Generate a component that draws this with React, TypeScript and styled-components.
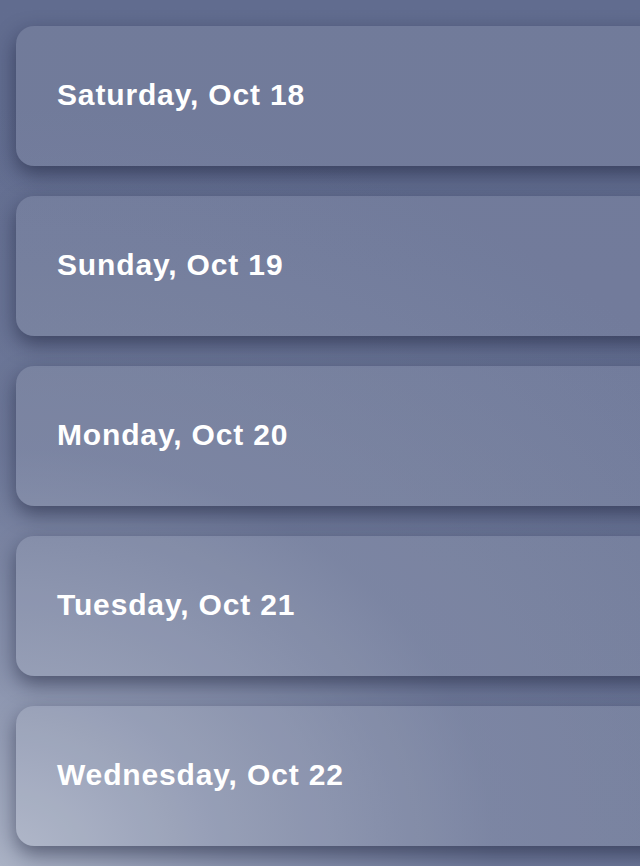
import React from "react";
import styled, { createGlobalStyle } from "styled-components";

const GlobalStyle = createGlobalStyle`
  html, body {
    margin: 0;
    padding: 0;
    width: 100%;
    height: 100%;
  }
  body {
    overflow: hidden;
    background:
      radial-gradient(ellipse 900px 760px at 0% 100%, rgba(170,178,197,1) 0%, rgba(145,154,179,0.85) 25%, rgba(120,130,160,0.5) 55%, rgba(100,111,146,0) 100%),
      linear-gradient(180deg, #616c8f 0%, #646f92 100%);
    font-family: "Liberation Sans", Arial, sans-serif;
  }
  #root {
    height: 100%;
  }
`;

const Page = styled.main`
  box-sizing: border-box;
  height: 100%;
  padding: 26px 0 0 16px;
  display: flex;
  flex-direction: column;
  gap: 30px;
  overflow: hidden;
`;

const DayCard = styled.section`
  flex: 0 0 140px;
  margin-right: -60px;
  display: flex;
  align-items: center;
  padding: 0 0 2px 41px;
  box-sizing: border-box;
  border-radius: 18px;
  background: rgba(255, 255, 255, 0.1);
  box-shadow: 0 8px 20px rgba(15, 20, 45, 0.5);
`;

const DayTitle = styled.h2`
  margin: 0;
  color: #ffffff;
  font-size: 30px;
  font-weight: 700;
  letter-spacing: 0.85px;
  line-height: 1;
`;

const days = [
  "Saturday, Oct 18",
  "Sunday, Oct 19",
  "Monday, Oct 20",
  "Tuesday, Oct 21",
  "Wednesday, Oct 22",
];

export default function App() {
  return (
    <>
      <GlobalStyle />
      <Page>
        {days.map((d) => (
          <DayCard key={d}>
            <DayTitle>{d}</DayTitle>
          </DayCard>
        ))}
      </Page>
    </>
  );
}
